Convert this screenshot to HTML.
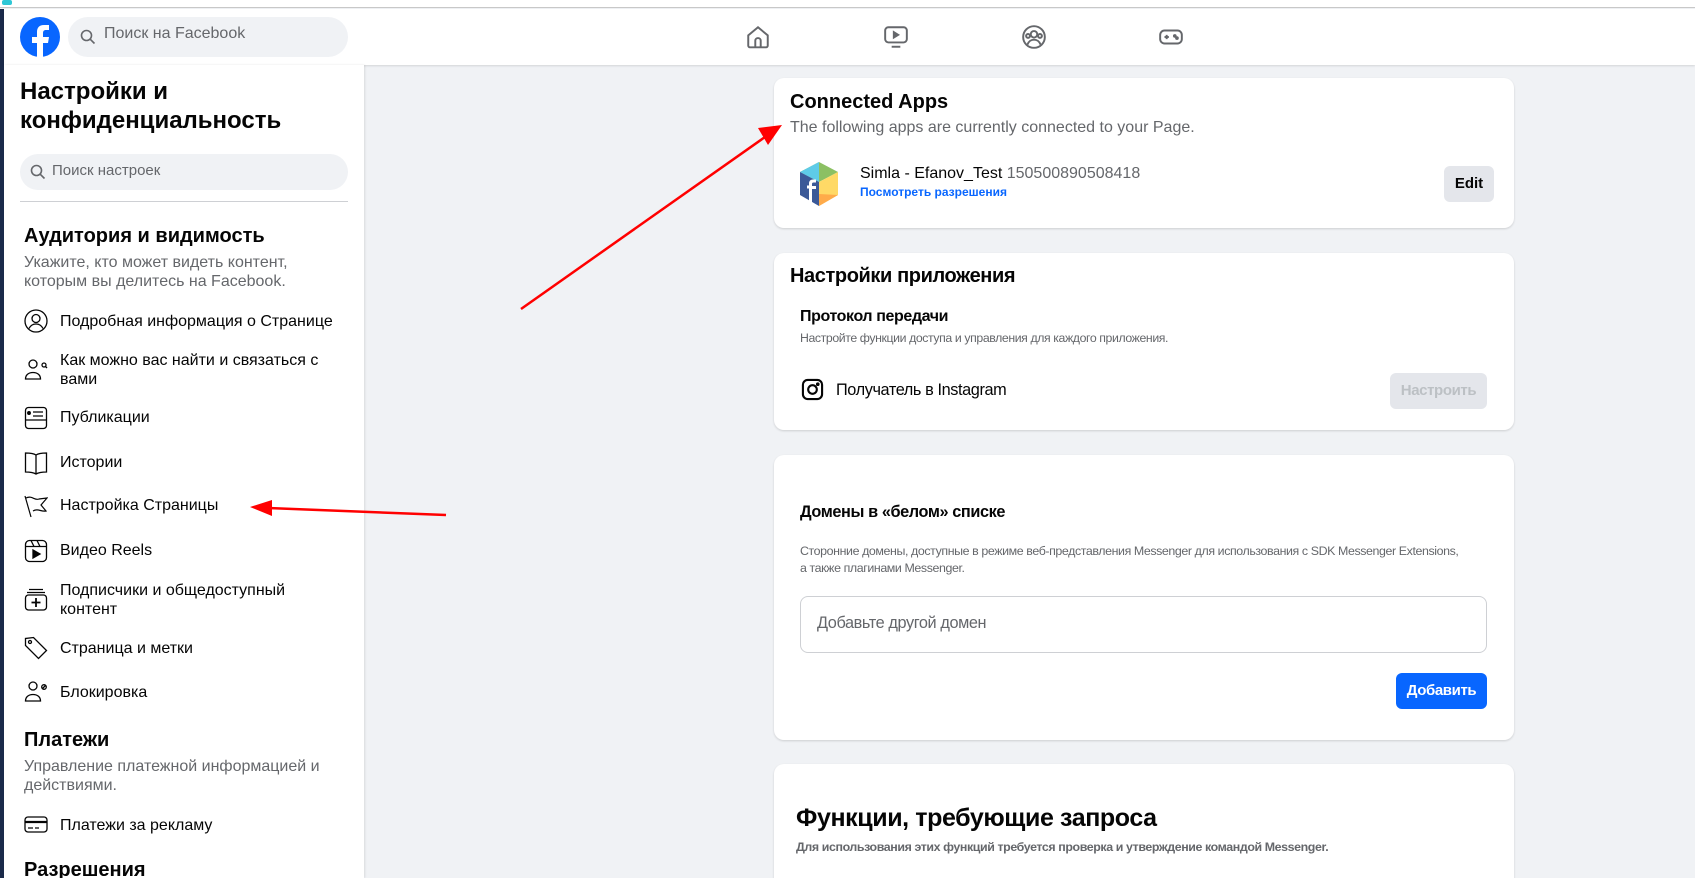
<!DOCTYPE html>
<html><head><meta charset="utf-8"><style>
*{margin:0;padding:0;box-sizing:border-box}
html,body{width:1695px;height:878px;overflow:hidden}
body{background:#f0f2f5;font-family:"Liberation Sans","Noto Sans CJK SC",sans-serif;color:#050505;position:relative}
.a{position:absolute;white-space:nowrap}
.top{position:absolute;left:0;top:0;width:1695px;height:8px;background:#fff;border-bottom:1px solid #c8c8c8}
.strip{position:absolute;left:0;top:9px;width:4px;height:869px;background:#1b2a4a}
.hdr{position:absolute;left:4px;top:9px;width:1691px;height:56px;background:#fff;box-shadow:0 1px 2px rgba(0,0,0,.12)}
.side{position:absolute;left:4px;top:65px;width:360px;height:813px;background:#fff;box-shadow:1px 0 2px rgba(0,0,0,.1)}
.card{position:absolute;left:774px;width:740px;background:#fff;border-radius:10px;box-shadow:0 1px 2px rgba(0,0,0,.15)}
.it{font-size:16px;line-height:19px;color:#050505}
.ic{position:absolute;left:24px}
.gray{color:#65676b}
.n{letter-spacing:-0.4px}
</style></head><body>
<div class="top"></div>
<div class="a" style="left:2px;top:0;width:10px;height:5px;background:#2ec7d6;border-radius:2px"></div>
<div class="strip"></div>
<div class="hdr"></div>
<svg class="a" style="left:20px;top:17px" width="40" height="40" viewBox="0 0 40 40"><circle cx="20" cy="20" r="20" fill="#0866ff"/><path d="M23 40V26h5l1-6h-6v-4c0-2 1-3 3-3h3V8h-5c-5 0-7 3-7 7v5h-5v6h5v14z" fill="#fff"/></svg>
<div class="a" style="left:68px;top:17px;width:280px;height:40px;background:#f0f2f5;border-radius:20px"></div>
<svg class="a" style="left:80px;top:29px" width="16" height="16" viewBox="0 0 16 16"><circle cx="6.5" cy="6.5" r="5" fill="none" stroke="#65676b" stroke-width="1.6"/><path d="M10.3 10.3L14.5 14.5" stroke="#65676b" stroke-width="1.6"/></svg>
<div class="a gray" style="left:104px;top:25px;font-size:16px">Поиск на Facebook</div>
<svg class="a" style="left:745px;top:24px" width="26" height="26" viewBox="0 0 24 24" fill="none" stroke="#65676b" stroke-width="1.8"><path d="M3 10.5L12 3l9 7.5V20a1.5 1.5 0 0 1-1.5 1.5h-15A1.5 1.5 0 0 1 3 20z"/><path d="M9.5 21.5v-6a2.5 2.5 0 0 1 5 0v6"/></svg>
<svg class="a" style="left:883px;top:24px" width="26" height="26" viewBox="0 0 24 24" fill="none" stroke="#65676b" stroke-width="1.8"><rect x="2" y="3" width="20" height="14" rx="3"/><path d="M8 21h8"/><path d="M10 7.5v5l4-2.5z" fill="#65676b"/></svg>
<svg class="a" style="left:1021px;top:24px" width="26" height="26" viewBox="0 0 24 24" fill="none" stroke="#65676b" stroke-width="1.8"><circle cx="12" cy="12" r="10"/><circle cx="12" cy="9.5" r="3"/><circle cx="6.5" cy="11" r="1.8"/><circle cx="17.5" cy="11" r="1.8"/><path d="M6 19c1-3 3.5-4.5 6-4.5s5 1.5 6 4.5"/></svg>
<svg class="a" style="left:1158px;top:24px" width="26" height="26" viewBox="0 0 24 24" fill="none" stroke="#65676b" stroke-width="1.8"><rect x="2" y="6" width="20" height="12" rx="4"/><path d="M6 12h4M8 10v4"/><circle cx="15.5" cy="11" r=".8" fill="#65676b"/><circle cx="17.5" cy="13" r=".8" fill="#65676b"/></svg>

<div class="side"></div>
<div class="a" style="left:20px;top:77px;font-size:24px;font-weight:bold;line-height:29px">Настройки и<br>конфиденциальность</div>
<div class="a" style="left:20px;top:154px;width:328px;height:36px;background:#f0f2f5;border-radius:18px"></div>
<svg class="a" style="left:30px;top:164px" width="16" height="16" viewBox="0 0 16 16"><circle cx="6.5" cy="6.5" r="5" fill="none" stroke="#65676b" stroke-width="1.6"/><path d="M10.3 10.3L14.5 14.5" stroke="#65676b" stroke-width="1.6"/></svg>
<div class="a gray" style="left:52px;top:162px;font-size:15px">Поиск настроек</div>
<div class="a" style="left:20px;top:201px;width:328px;height:1px;background:#ced0d4"></div>
<div class="a" style="left:24px;top:225px;font-size:20px;font-weight:bold">Аудитория и видимость</div>
<div class="a gray" style="left:24px;top:253px;font-size:16px;line-height:19px">Укажите, кто может видеть контент,<br>которым вы делитесь на Facebook.</div>

<svg class="ic" style="top:309px" width="24" height="24" viewBox="0 0 24 24" fill="none" stroke="#050505" stroke-width="1.3"><circle cx="12" cy="12" r="11"/><circle cx="12" cy="9.5" r="4"/><path d="M5 19.5c1.5-3 4-4.5 7-4.5s5.5 1.5 7 4.5"/></svg>
<div class="a it" style="left:60px;top:312px">Подробная информация о Странице</div>
<svg class="ic" style="top:358px" width="24" height="24" viewBox="0 0 24 24" fill="none" stroke="#050505" stroke-width="1.3"><circle cx="9" cy="6" r="4"/><path d="M1.5 21c0-4 3-6.5 7.5-6.5s7.5 2.5 7.5 6.5z"/><circle cx="20" cy="7" r="2"/><path d="M21.5 8.5l1.5 1.5"/></svg>
<div class="a it" style="left:60px;top:351px">Как можно вас найти и связаться с<br>вами</div>
<svg class="ic" style="top:406px" width="24" height="24" viewBox="0 0 24 24" fill="none" stroke="#050505" stroke-width="1.3"><rect x="1.5" y="1.5" width="21" height="21" rx="3"/><path d="M1.5 14h21M9 6h10M9 10h10"/><circle cx="5" cy="7" r="1.3" fill="#050505"/></svg>
<div class="a it" style="left:60px;top:408px">Публикации</div>
<svg class="ic" style="top:451px" width="24" height="24" viewBox="0 0 24 24" fill="none" stroke="#050505" stroke-width="1.3"><path d="M12 4v19M12 4C9 2 5 2 1.5 2v19c3.5 0 7 0 10.5 2 3.5-2 7-2 10.5-2V2C19 2 15 2 12 4z"/></svg>
<div class="a it" style="left:60px;top:453px">Истории</div>
<svg class="ic" style="top:494px" width="24" height="24" viewBox="0 0 24 24" fill="none" stroke="#050505" stroke-width="1.2"><path d="M1 2l6 21M2 4c6-3 9 3 13 1l8-1-6 7 5 6c-5 1-8-3-13 0"/></svg>
<div class="a it" style="left:60px;top:496px">Настройка Страницы</div>
<svg class="ic" style="top:539px" width="24" height="24" viewBox="0 0 24 24" fill="none" stroke="#050505" stroke-width="1.3"><rect x="1.5" y="1.5" width="21" height="21" rx="4"/><path d="M1.5 7.5h21M7 1.5l3 6M13 1.5l3 6"/><path d="M9 11v8l7-4z" fill="#050505"/></svg>
<div class="a it" style="left:60px;top:541px">Видео Reels</div>
<svg class="ic" style="top:587px" width="24" height="24" viewBox="0 0 24 24" fill="none" stroke="#050505" stroke-width="1.3"><path d="M5 2.5h14M3 5.5h18"/><rect x="1.5" y="8" width="21" height="15" rx="3"/><path d="M12 11v9M7.5 15.5h9" stroke-width="1.8"/></svg>
<div class="a it" style="left:60px;top:581px">Подписчики и общедоступный<br>контент</div>
<svg class="ic" style="top:636px" width="24" height="24" viewBox="0 0 24 24" fill="none" stroke="#050505" stroke-width="1.3"><path d="M1.5 2.5v7l13 13 8-8-13-13z"/><circle cx="6" cy="6" r="1.5"/></svg>
<div class="a it" style="left:60px;top:639px">Страница и метки</div>
<svg class="ic" style="top:680px" width="24" height="24" viewBox="0 0 24 24" fill="none" stroke="#050505" stroke-width="1.3"><circle cx="9" cy="6" r="4"/><path d="M1.5 21c0-4 3-6.5 7.5-6.5s7.5 2.5 7.5 6.5z"/><circle cx="20" cy="7" r="2.3"/><path d="M18.5 8.5l3-3"/></svg>
<div class="a it" style="left:60px;top:683px">Блокировка</div>
<div class="a" style="left:24px;top:729px;font-size:20px;font-weight:bold">Платежи</div>
<div class="a gray" style="left:24px;top:757px;font-size:16px;line-height:19px">Управление платежной информацией и<br>действиями.</div>
<svg class="ic" style="top:815px" width="24" height="20" viewBox="0 0 24 20" fill="none" stroke="#050505" stroke-width="1.3"><rect x="1" y="2" width="22" height="15" rx="3"/><path d="M1 7h22" stroke-width="2.2"/><path d="M4 13h5M11 13h4"/></svg>
<div class="a it" style="left:60px;top:816px">Платежи за рекламу</div>
<div class="a" style="left:24px;top:859px;font-size:20px;font-weight:bold">Разрешения</div>

<div class="card" style="top:78px;height:150px"></div>
<div class="a" style="left:790px;top:91px;font-size:20px;font-weight:bold">Connected Apps</div>
<div class="a gray" style="left:790px;top:119px;font-size:16px">The following apps are currently connected to your Page.</div>
<svg class="a" style="left:798px;top:161px" width="42" height="46" viewBox="0 0 42 46"><path d="M21 1L2 11l19 10 19-10z" fill="#8cc063"/><path d="M21 1L2 11l19 10z" fill="#5ecbe8"/><path d="M2 11v23l19 11V21z" fill="#3b5998"/><path d="M21 21v24l19-11V11z" fill="#ffd966"/><path d="M21 33v12l19-11z" fill="#ffab4a"/><path d="M14 42V28h4v-3h-4v-2c0-1 .5-1.5 1.5-1.5H18v-3h-3c-3 0-4 2-4 4v2H9v3h2v13z" fill="#fff"/></svg>
<div class="a" style="left:860px;top:165px;font-size:16px">Simla - Efanov_Test <span class="gray">150500890508418</span></div>
<div class="a" style="left:860px;top:185px;font-size:12px;font-weight:bold;color:#0866ff">Посмотреть разрешения</div>
<div class="a" style="left:1444px;top:166px;width:50px;height:36px;background:#e4e6eb;border-radius:6px;font-size:15px;font-weight:bold;text-align:center;line-height:36px">Edit</div>

<div class="card" style="top:253px;height:177px"></div>
<div class="a n" style="left:790px;top:265px;font-size:20px;font-weight:bold">Настройки приложения</div>
<div class="a n" style="left:800px;top:308px;font-size:16px;font-weight:bold">Протокол передачи</div>
<div class="a gray n" style="left:800px;top:331px;font-size:12.3px">Настройте функции доступа и управления для каждого приложения.</div>
<svg class="a" style="left:801px;top:378px" width="23" height="23" viewBox="0 0 24 24" fill="none" stroke="#050505" stroke-width="2.2"><rect x="2" y="2" width="20" height="20" rx="5"/><circle cx="12" cy="12" r="4.5"/><circle cx="17.5" cy="6.5" r=".8" fill="#050505"/></svg>
<div class="a n" style="left:836px;top:381px;font-size:16.3px">Получатель в Instagram</div>
<div class="a n" style="left:1390px;top:373px;width:97px;height:36px;background:#e4e6eb;border-radius:6px;font-size:15px;font-weight:bold;color:#bcc0c4;text-align:center;line-height:36px">Настроить</div>

<div class="card" style="top:455px;height:285px"></div>
<div class="a n" style="left:800px;top:503px;font-size:16.3px;font-weight:bold">Домены в «белом» списке</div>
<div class="a gray n" style="left:800px;top:543px;font-size:12.4px;line-height:17px">Сторонние домены, доступные в режиме веб-представления Messenger для использования с SDK Messenger Extensions,<br>а также плагинами Messenger.</div>
<div class="a" style="left:800px;top:596px;width:687px;height:57px;border:1px solid #ced0d4;border-radius:8px"></div>
<div class="a gray n" style="left:817px;top:614px;font-size:16.3px">Добавьте другой домен</div>
<div class="a n" style="left:1396px;top:673px;width:91px;height:36px;background:#0866ff;border-radius:6px;font-size:15px;font-weight:bold;color:#fff;text-align:center;line-height:36px">Добавить</div>

<div class="card" style="top:764px;height:130px"></div>
<div class="a n" style="left:796px;top:804px;font-size:25px;font-weight:bold">Функции, требующие запроса</div>
<div class="a gray n" style="left:796px;top:840px;font-size:12.4px;font-weight:bold">Для использования этих функций требуется проверка и утверждение командой Messenger.</div>

<svg class="a" style="left:0;top:0" width="1695" height="878" viewBox="0 0 1695 878">
<path d="M521 309L765 137" stroke="#f00" stroke-width="2.5"/><path d="M782 125L758 128L768 145z" fill="#f00"/>
<path d="M446 515L268 508" stroke="#f00" stroke-width="2.5"/><path d="M250 507L272 500L272 516z" fill="#f00"/>
</svg>
</body></html>
